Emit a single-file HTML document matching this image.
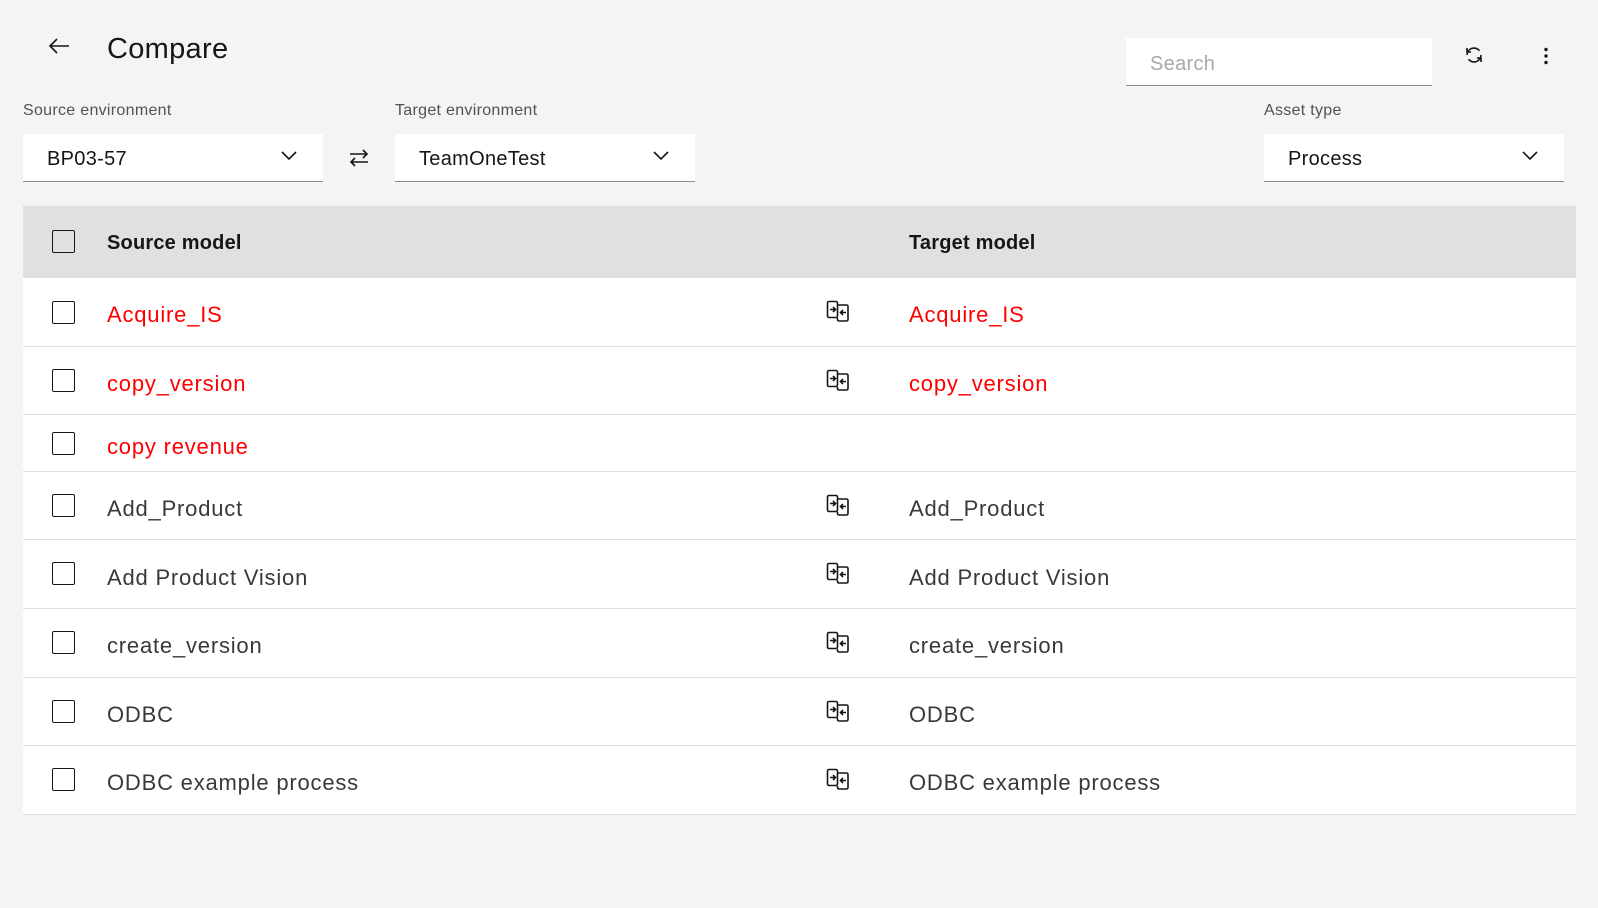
<!DOCTYPE html>
<html><head><meta charset="utf-8"><style>
*{box-sizing:border-box;margin:0;padding:0}
body{width:1598px;height:908px;background:#f4f4f4;font-family:"Liberation Sans",sans-serif;color:#161616;position:relative;overflow:hidden}
.a{position:absolute}
.lbl{font-size:16px;color:#525252;letter-spacing:.3px}
.dd{background:#fff;border-bottom:1px solid #8d8d8d;height:48px;font-size:20px;display:flex;align-items:center;padding-left:24px;padding-top:4px;letter-spacing:.3px}
.dd svg{position:absolute;right:26px;top:17px}
.tbl{left:23px;width:1553px;top:206px}
.hdr{height:72px;background:#e0e0e0;position:relative;font-weight:bold;font-size:20px;letter-spacing:.2px}
.row{background:#fff;border-bottom:1px solid #e0e0e0;position:relative;font-size:22px;letter-spacing:.8px}
.cb{position:absolute;left:29px;width:23px;height:23px;border:1.5px solid #161616;border-radius:2px;background:transparent}
.t1{position:absolute;left:84px}
.t2{position:absolute;left:886px}
.ic{position:absolute;left:803px}
.red{color:#ff0000}
.g{color:#393939}
</style></head><body>
<svg class="a" style="left:47px;top:36px" width="24" height="20" viewBox="0 0 24 20"><path d="M22 10H3M10 3L3 10l7 7" fill="none" stroke="#161616" stroke-width="1.6"/></svg>
<div class="a" style="left:107px;top:33px;font-size:29px;letter-spacing:.3px">Compare</div>
<div class="a" style="left:1126px;top:38px;width:306px;height:48px;background:#fff;border-bottom:1px solid #8d8d8d;font-size:20px;color:#a8a8a8;padding:15px 24px;letter-spacing:.3px">Search</div>
<svg class="a" style="left:1463px;top:44px" width="22" height="22" viewBox="0 0 22 22" fill="none" stroke="#161616" stroke-width="1.6"><path d="M4 11a7 7 0 0 1 12.5-4.3M18 11a7 7 0 0 1-12.5 4.3"/><path d="M4 4v4h4M18 18v-4h-4"/></svg>
<svg class="a" style="left:1542px;top:47px" width="8" height="18"><circle cx="4" cy="2.5" r="1.7" fill="#161616"/><circle cx="4" cy="9" r="1.7" fill="#161616"/><circle cx="4" cy="15.5" r="1.7" fill="#161616"/></svg>
<div class="a lbl" style="left:23px;top:102px">Source environment</div>
<div class="a lbl" style="left:395px;top:102px">Target environment</div>
<div class="a lbl" style="left:1264px;top:102px">Asset type</div>
<div class="a dd" style="left:23px;top:134px;width:300px">BP03-57<svg width="16" height="10"><path d="M1 1l7 7 7-7" fill="none" stroke="#161616" stroke-width="1.6"/></svg></div>
<svg class="a" style="left:348px;top:148px" width="22" height="20" viewBox="0 0 22 20" fill="none" stroke="#161616" stroke-width="1.6"><path d="M2 6h17M15 2l4 4-4 4M20 14H3M7 10l-4 4 4 4"/></svg>
<div class="a dd" style="left:395px;top:134px;width:300px">TeamOneTest<svg width="16" height="10"><path d="M1 1l7 7 7-7" fill="none" stroke="#161616" stroke-width="1.6"/></svg></div>
<div class="a dd" style="left:1264px;top:134px;width:300px">Process<svg width="16" height="10"><path d="M1 1l7 7 7-7" fill="none" stroke="#161616" stroke-width="1.6"/></svg></div>

<div class="a tbl">
<div class="hdr"><div class="cb" style="top:24px"></div><div class="t1" style="top:26px">Source model</div><div class="t2" style="top:26px">Target model</div></div>
<div class="row" style="height:69px"><div class="cb" style="top:23px"></div><div class="t1 red" style="top:24px">Acquire_IS</div><svg class="ic" style="top:22px" width="24" height="22" viewBox="0 0 24 22" fill="none" stroke="#161616" stroke-width="1.6"><rect x="1.5" y="1.5" width="10" height="16" rx="1.5"/><path d="M11.5 5h9a1.5 1.5 0 0 1 1.5 1.5v13a1.5 1.5 0 0 1-1.5 1.5h-7.5a1.5 1.5 0 0 1-1.5-1.5V18"/><path d="M4 9.5h5M7 7l2.5 2.5L7 12M20 12.5h-5M17 10l-2.5 2.5L17 15"/></svg><div class="t2 red" style="top:24px">Acquire_IS</div></div>
<div class="row" style="height:68px"><div class="cb" style="top:22px"></div><div class="t1 red" style="top:24px">copy_version</div><svg class="ic" style="top:22px" width="24" height="22" viewBox="0 0 24 22" fill="none" stroke="#161616" stroke-width="1.6"><rect x="1.5" y="1.5" width="10" height="16" rx="1.5"/><path d="M11.5 5h9a1.5 1.5 0 0 1 1.5 1.5v13a1.5 1.5 0 0 1-1.5 1.5h-7.5a1.5 1.5 0 0 1-1.5-1.5V18"/><path d="M4 9.5h5M7 7l2.5 2.5L7 12M20 12.5h-5M17 10l-2.5 2.5L17 15"/></svg><div class="t2 red" style="top:24px">copy_version</div></div>
<div class="row" style="height:57px"><div class="cb" style="top:17px"></div><div class="t1 red" style="top:19px">copy revenue</div></div>
<div class="row" style="height:68px"><div class="cb" style="top:22px"></div><div class="t1 g" style="top:24px">Add_Product</div><svg class="ic" style="top:22px" width="24" height="22" viewBox="0 0 24 22" fill="none" stroke="#161616" stroke-width="1.6"><rect x="1.5" y="1.5" width="10" height="16" rx="1.5"/><path d="M11.5 5h9a1.5 1.5 0 0 1 1.5 1.5v13a1.5 1.5 0 0 1-1.5 1.5h-7.5a1.5 1.5 0 0 1-1.5-1.5V18"/><path d="M4 9.5h5M7 7l2.5 2.5L7 12M20 12.5h-5M17 10l-2.5 2.5L17 15"/></svg><div class="t2 g" style="top:24px">Add_Product</div></div>
<div class="row" style="height:69px"><div class="cb" style="top:22px"></div><div class="t1 g" style="top:25px">Add Product Vision</div><svg class="ic" style="top:22px" width="24" height="22" viewBox="0 0 24 22" fill="none" stroke="#161616" stroke-width="1.6"><rect x="1.5" y="1.5" width="10" height="16" rx="1.5"/><path d="M11.5 5h9a1.5 1.5 0 0 1 1.5 1.5v13a1.5 1.5 0 0 1-1.5 1.5h-7.5a1.5 1.5 0 0 1-1.5-1.5V18"/><path d="M4 9.5h5M7 7l2.5 2.5L7 12M20 12.5h-5M17 10l-2.5 2.5L17 15"/></svg><div class="t2 g" style="top:25px">Add Product Vision</div></div>
<div class="row" style="height:69px"><div class="cb" style="top:22px"></div><div class="t1 g" style="top:24px">create_version</div><svg class="ic" style="top:22px" width="24" height="22" viewBox="0 0 24 22" fill="none" stroke="#161616" stroke-width="1.6"><rect x="1.5" y="1.5" width="10" height="16" rx="1.5"/><path d="M11.5 5h9a1.5 1.5 0 0 1 1.5 1.5v13a1.5 1.5 0 0 1-1.5 1.5h-7.5a1.5 1.5 0 0 1-1.5-1.5V18"/><path d="M4 9.5h5M7 7l2.5 2.5L7 12M20 12.5h-5M17 10l-2.5 2.5L17 15"/></svg><div class="t2 g" style="top:24px">create_version</div></div>
<div class="row" style="height:68px"><div class="cb" style="top:22px"></div><div class="t1 g" style="top:24px">ODBC</div><svg class="ic" style="top:22px" width="24" height="22" viewBox="0 0 24 22" fill="none" stroke="#161616" stroke-width="1.6"><rect x="1.5" y="1.5" width="10" height="16" rx="1.5"/><path d="M11.5 5h9a1.5 1.5 0 0 1 1.5 1.5v13a1.5 1.5 0 0 1-1.5 1.5h-7.5a1.5 1.5 0 0 1-1.5-1.5V18"/><path d="M4 9.5h5M7 7l2.5 2.5L7 12M20 12.5h-5M17 10l-2.5 2.5L17 15"/></svg><div class="t2 g" style="top:24px">ODBC</div></div>
<div class="row" style="height:69px"><div class="cb" style="top:22px"></div><div class="t1 g" style="top:24px">ODBC example process</div><svg class="ic" style="top:22px" width="24" height="22" viewBox="0 0 24 22" fill="none" stroke="#161616" stroke-width="1.6"><rect x="1.5" y="1.5" width="10" height="16" rx="1.5"/><path d="M11.5 5h9a1.5 1.5 0 0 1 1.5 1.5v13a1.5 1.5 0 0 1-1.5 1.5h-7.5a1.5 1.5 0 0 1-1.5-1.5V18"/><path d="M4 9.5h5M7 7l2.5 2.5L7 12M20 12.5h-5M17 10l-2.5 2.5L17 15"/></svg><div class="t2 g" style="top:24px">ODBC example process</div></div>
</div>
</body></html>
